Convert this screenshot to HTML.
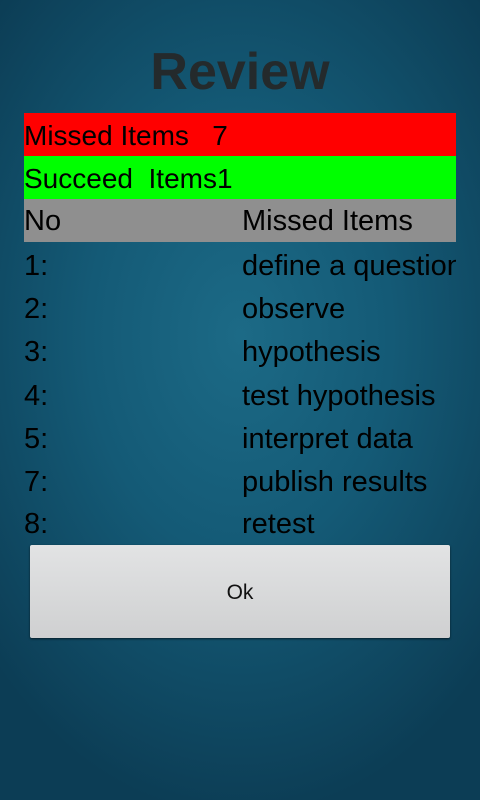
<!DOCTYPE html>
<html><head><meta charset="utf-8"><style>
*{margin:0;padding:0;box-sizing:border-box}
html,body{width:480px;height:800px;overflow:hidden}
body{background:radial-gradient(ellipse 70% 60% at 50% 42%,#1c6a86 0%,#145a76 45%,#0c3d55 100%);font-family:"Liberation Sans",sans-serif;color:#000;position:relative}
.t{position:absolute;left:0;width:480px;top:40px;text-align:center;font-size:52px;font-weight:bold;color:#242a2c;line-height:64px}
.bar{position:absolute;left:24px;width:432px;height:43px;font-size:28px;line-height:45px;white-space:nowrap;overflow:hidden}
.row{position:absolute;left:24px;width:432px;height:43px;font-size:29px;line-height:45px;white-space:nowrap;overflow:hidden}
.c2{position:absolute;left:218px;top:0}
.btn{position:absolute;left:30px;top:545px;width:420px;height:93px;background:linear-gradient(#e2e3e4,#cfd0d1);border-radius:2px;box-shadow:0 1px 2px rgba(0,0,0,.6);text-align:center;line-height:96px;font-size:21px;color:#111}
</style></head><body>
<div class="t">Review</div>
<div class="bar" style="top:113px;background:#ff0000">Missed Items&nbsp;&nbsp;&nbsp;7</div>
<div class="bar" style="top:156px;background:#00ff00">Succeed&nbsp;&nbsp;Items1</div>
<div class="row" style="top:199px;background:#8f8f8f">No<span class="c2">Missed Items</span></div>
<div class="row" style="top:244px">1:<span class="c2">define a question</span></div>
<div class="row" style="top:287px">2:<span class="c2">observe</span></div>
<div class="row" style="top:330px">3:<span class="c2">hypothesis</span></div>
<div class="row" style="top:374px">4:<span class="c2">test hypothesis</span></div>
<div class="row" style="top:417px">5:<span class="c2">interpret data</span></div>
<div class="row" style="top:460px">7:<span class="c2">publish results</span></div>
<div class="row" style="top:502px">8:<span class="c2">retest</span></div>
<div class="btn">Ok</div>
</body></html>
